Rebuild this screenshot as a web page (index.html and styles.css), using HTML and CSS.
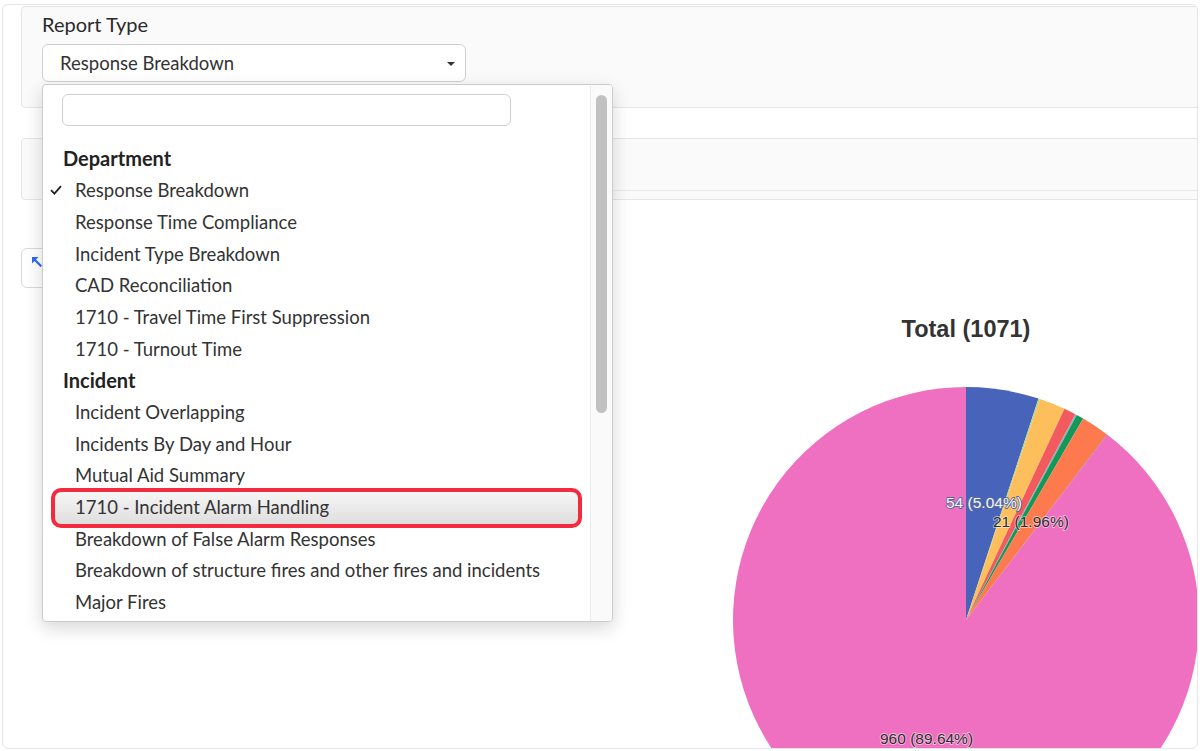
FILE: index.html
```html
<!DOCTYPE html>
<html lang="en">
<head>
<meta charset="utf-8">
<title>Report Type</title>
<link rel="stylesheet" href="styles.css">
</head>
<body>
<div class="frame">
  <div class="filters">
    <div class="card card-report">
      <div class="field-label">Report Type</div>
      <div class="select-wrap">
        <div class="select">
          <span class="select-value">Response Breakdown</span>
          <span class="caret"></span>
        </div>
        <div class="dropdown">
          <div class="dd-list">
            <div class="dd-search"><div class="dd-input"></div></div>
            <ul class="dd-options">
              <li class="group">Department</li>
              <li class="opt checked"><svg class="check" width="12" height="10" viewBox="0 0 12 10"><polyline points="1,5.2 4.4,8.6 11,1.2" fill="none" stroke="#222" stroke-width="1.8"/></svg>Response Breakdown</li>
              <li class="opt">Response Time Compliance</li>
              <li class="opt">Incident Type Breakdown</li>
              <li class="opt">CAD Reconciliation</li>
              <li class="opt">1710 - Travel Time First Suppression</li>
              <li class="opt">1710 - Turnout Time</li>
              <li class="group">Incident</li>
              <li class="opt">Incident Overlapping</li>
              <li class="opt">Incidents By Day and Hour</li>
              <li class="opt">Mutual Aid Summary</li>
              <li class="opt active">1710 - Incident Alarm Handling</li>
              <li class="opt">Breakdown of False Alarm Responses</li>
              <li class="opt">Breakdown of structure fires and other fires and incidents</li>
              <li class="opt">Major Fires</li>
            </ul>
          </div>
          <div class="dd-scroll"><div class="dd-thumb"></div></div>
        </div>
      </div>
    </div>
    <div class="card card-second"><div class="card-inner"></div></div>
  </div>
  <div class="content">
    <div class="icon-btn">
      <svg width="10" height="10" viewBox="0 0 10 10"><polygon points="0,0 6.5,0 0,6.5" fill="#2f66f5"/><line x1="1.5" y1="1.5" x2="9.3" y2="9.3" stroke="#2f66f5" stroke-width="2.2"/></svg>
    </div>
    <svg class="chart" width="500" height="448" viewBox="697 300 500 448">
      <text x="966" y="337" text-anchor="middle" class="chart-title">Total (1071)</text>
      <path d="M966,620 L1107.4,434.8 A233,233 0 1,1 966,387 Z" fill="#ef6fc0"/>
      <path d="M966,620 L966,387 A233,233 0 0,1 1038.5,398.6 Z" fill="#4864ba"/>
      <path d="M966,620 L1038.5,398.6 A233,233 0 0,1 1039.9,399.0 Z" fill="#a8d890"/>
      <path d="M966,620 L1039.9,399.0 A233,233 0 0,1 1064.5,408.8 Z" fill="#fdbf5c"/>
      <path d="M966,620 L1064.5,408.8 A233,233 0 0,1 1075.4,414.3 Z" fill="#f25a5e"/>
      <path d="M966,620 L1075.4,414.3 A233,233 0 0,1 1076.8,415.1 Z" fill="#9aa6b8"/>
      <path d="M966,620 L1076.8,415.1 A233,233 0 0,1 1083.2,418.6 Z" fill="#12995a"/>
      <path d="M966,620 L1083.2,418.6 A233,233 0 0,1 1107.1,434.6 Z" fill="#fd7a4f"/>
      <path d="M966,620 L1107.1,434.6 A233,233 0 0,1 1107.4,434.8 Z" fill="#8566a8"/>
      <text x="946" y="508" class="lbl lbl-light">54 (5.04%)</text>
      <text x="993" y="527" class="lbl lbl-dark">21 (1.96%)</text>
      <text x="880" y="744" class="lbl lbl-dark">960 (89.64%)</text>
    </svg>
  </div>
</div>
</body>
</html>
```

FILE: styles.css
```css
html, body {
  margin: 0;
  padding: 0;
  background: #ffffff;
  height: 751px;
  overflow: hidden;
}

body {
  font-family: Lato, "Noto Sans", "Liberation Sans", sans-serif;
  color: #333333;
}

.frame {
  margin: 4px 2px 0 2px;
  height: 745px;
  box-sizing: border-box;
  border: 1px solid #e6e6ea;
  border-radius: 6px;
  background: #ffffff;
  overflow: hidden;
}

.filters {
  padding: 1px 0 0 18px;
}

.card {
  box-sizing: border-box;
  background: #fafafa;
  border: 1px solid #e5e5e7;
  border-radius: 4px;
  margin-right: -8px;
}

.card-report {
  height: 102px;
  padding: 6px 20px 0 20px;
  position: relative;
  z-index: 5;
}

.field-label {
  font-size: 20px;
  line-height: 22px;
  height: 22px;
  margin-bottom: 9px;
  color: #2a2a2a;
}

.select-wrap {
  position: relative;
  width: 424px;
}

.select {
  box-sizing: border-box;
  height: 38px;
  border: 1px solid #cfcfcf;
  border-radius: 6px;
  background: #ffffff;
  display: flex;
  align-items: center;
  justify-content: space-between;
  padding: 0 10px 0 17px;
  font-size: 18.5px;
  color: #333333;
}

.caret {
  width: 0;
  height: 0;
  border-left: 4px solid transparent;
  border-right: 4px solid transparent;
  border-top: 4px solid #333333;
  margin-top: 2px;
}

.dropdown {
  position: absolute;
  top: 40px;
  left: 0;
  width: 571px;
  height: 538px;
  box-sizing: border-box;
  border: 1px solid #cccccc;
  border-radius: 4px;
  background: #ffffff;
  box-shadow: 0 6px 18px rgba(0, 0, 0, 0.16);
  display: flex;
  overflow: hidden;
}

.dd-list {
  flex: 1;
  min-width: 0;
}

.dd-search {
  padding: 9px 0 0 19px;
  margin-bottom: 17.45px;
}

.dd-input {
  width: 449px;
  height: 32px;
  box-sizing: border-box;
  border: 1px solid #cfcfcf;
  border-radius: 6px;
  background: #ffffff;
}

.dd-options {
  list-style: none;
  margin: 0;
  padding: 0;
}

.dd-options li {
  height: 31.7px;
  line-height: 31.7px;
  white-space: nowrap;
}

.group {
  font-size: 20px;
  font-weight: 700;
  color: #222222;
  padding-left: 20px;
}

.opt {
  font-size: 18.5px;
  color: #333333;
  padding-left: 32px;
}

.opt.checked {
  padding-left: 7px;
  display: flex;
  align-items: center;
}

.check {
  display: block;
  margin-right: 13px;
  margin-top: -1px;
}

.opt.active {
  margin: 0 12px;
  padding-left: 20px;
  border-radius: 6px;
  background: linear-gradient(#f6f6f6, #dedede);
  outline: 4px solid #f42a3f;
  position: relative;
  z-index: 1;
}

.dd-scroll {
  width: 22px;
  box-sizing: border-box;
  border-left: 1px solid #ececec;
  background: #fafafa;
}

.dd-thumb {
  margin: 10px 0 0 5px;
  width: 11px;
  height: 318px;
  border-radius: 6px;
  background: #c1c1c1;
}

.card-second {
  margin-top: 30px;
  height: 62px;
}

.card-inner {
  height: 52px;
  box-sizing: border-box;
  margin-left: 20px;
  border-bottom: 1px solid #e9e9eb;
}

.content {
  display: flex;
  align-items: flex-start;
  padding: 48px 0 0 18px;
}

.icon-btn {
  width: 40px;
  height: 40px;
  box-sizing: border-box;
  border: 1px solid #d9d9d9;
  border-radius: 6px;
  background: #ffffff;
  padding: 8px 0 0 10px;
}

.icon-btn svg {
  display: block;
}

.chart {
  display: block;
  margin-left: auto;
  margin-top: 52px;
  flex: none;
}

.chart-title {
  font-family: "Liberation Sans", Arial, sans-serif;
  font-weight: 700;
  font-size: 23.5px;
  fill: #333333;
}

.lbl {
  font-family: "Liberation Sans", Arial, sans-serif;
  font-size: 15.5px;
  paint-order: stroke;
  stroke-linejoin: round;
}

.lbl-light {
  fill: #f2f4fb;
  stroke: #5a6a98;
  stroke-width: 1.8px;
}

.lbl-dark {
  fill: #2e2e2e;
  stroke: rgba(255, 255, 255, 0.5);
  stroke-width: 1.8px;
}
```
